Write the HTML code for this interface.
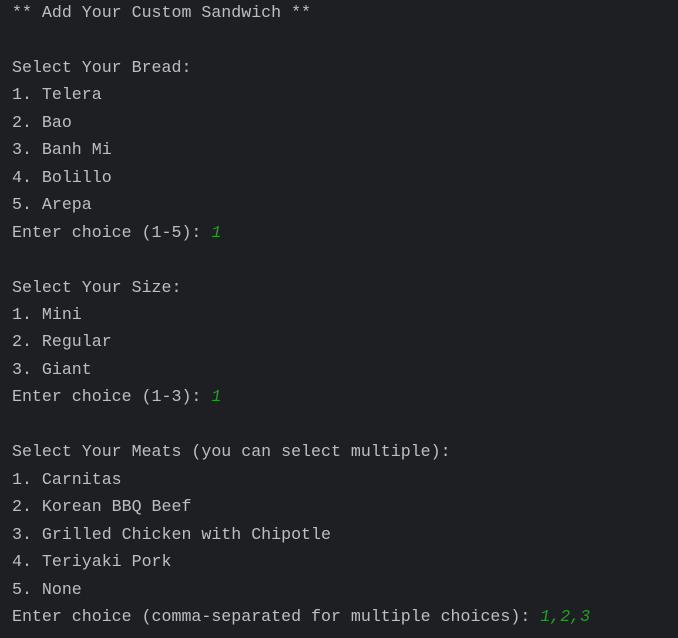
<!DOCTYPE html>
<html><head><meta charset="utf-8"><style>
html,body{margin:0;padding:0;background:#1e1f22;width:678px;height:638px;overflow:hidden}
pre{margin:0;position:absolute;left:12px;top:-1px;font-family:"Liberation Mono",monospace;font-size:16.62px;line-height:27.45px;color:#bcbec4;}
.g{color:#2a9a2a;font-style:italic}
</style></head><body><pre>** Add Your Custom Sandwich **

Select Your Bread:
1. Telera
2. Bao
3. Banh Mi
4. Bolillo
5. Arepa
Enter choice (1-5): <span class="g">1</span>

Select Your Size:
1. Mini
2. Regular
3. Giant
Enter choice (1-3): <span class="g">1</span>

Select Your Meats (you can select multiple):
1. Carnitas
2. Korean BBQ Beef
3. Grilled Chicken with Chipotle
4. Teriyaki Pork
5. None
Enter choice (comma-separated for multiple choices): <span class="g">1,2,3</span></pre></body></html>
